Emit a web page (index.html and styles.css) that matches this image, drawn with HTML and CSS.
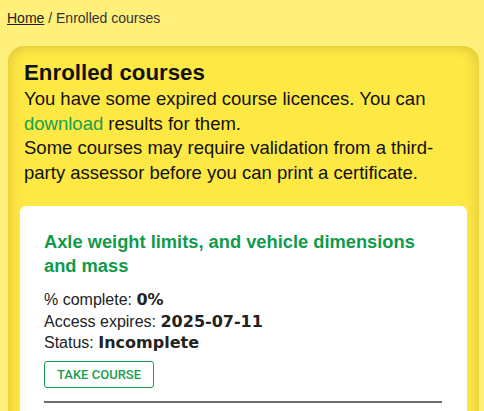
FILE: index.html
```html
<!DOCTYPE html>
<html lang="en">
<head>
    <meta charset="UTF-8">
    <meta name="viewport" content="width=device-width, initial-scale=1.0">
    <title>Enrolled courses</title>
    <link rel="stylesheet" href="styles.css">
</head>
<body>
    <nav class="breadcrumbs">
        <a href="#">Home</a> / Enrolled courses
    </nav>

    <section class="panel">
        <h1>Enrolled courses</h1>
        <p class="intro">
            You have some expired course licences. You can
            <a href="#">download</a> results for them.<br>
            Some courses may require validation from a third-party assessor before you can print a certificate.
        </p>

        <div class="course-card">
            <h2>Axle weight limits, and vehicle dimensions and mass</h2>
            <div class="course-info">
                <div>% complete: <strong>0%</strong></div>
                <div>Access expires: <strong>2025-07-11</strong></div>
                <div>Status: <strong>Incomplete</strong></div>
            </div>
            <button class="take-btn">Take course</button>
            <hr>
        </div>
    </section>
</body>
</html>
```

FILE: styles.css
```css
body {
    margin: 0;
    padding: 0 5px 0 8px;
    font-family: "Liberation Sans", Arial, sans-serif;
    background-color: #fff07c;
    color: #111;
}

.breadcrumbs {
    padding-top: 10px;
    height: 46px;
    box-sizing: border-box;
    font-size: 14px;
    color: #333;
    margin-left: -1px;
}

.breadcrumbs a {
    color: #222;
}

.panel {
    background-color: #fee844;
    border-radius: 16px 16px 0 0;
    box-shadow: inset 0 8px 12px -6px #e3ca3a, inset 10px 0 12px -6px #e9d13c, inset -10px 0 12px -6px #e9d13c;
    padding: 12px 12px 0 12px;
    min-height: 400px;
}

.panel h1 {
    margin: 0;
    padding: 0 4px;
    font-size: 22.3px;
    line-height: 29px;
}

.intro {
    margin: 0;
    padding: 0 4px;
    font-size: 18.5px;
    line-height: 24.5px;
}

.intro a {
    color: #15a04c;
    text-decoration: none;
}

.course-card {
    margin-top: 21px;
    background-color: #fff;
    border-radius: 6px 6px 0 0;
    padding: 24px 24px 10px 24px;
}

.course-card h2 {
    margin: 0 0 11px 0;
    font-size: 18.3px;
    line-height: 24px;
    color: #109a4c;
}

.course-info {
    font-size: 16px;
    line-height: 21.5px;
    color: #222;
}

.course-info strong {
    font-family: "DejaVu Sans", sans-serif;
    font-size: 16px;
}

.take-btn {
    margin-top: 7px;
    width: 110px;
    height: 27px;
    background: #fff;
    border: 1px solid #16a04e;
    border-radius: 3px;
    color: #16a04e;
    font-family: Roboto, sans-serif;
    font-weight: 500;
    font-size: 13px;
    text-transform: uppercase;
    padding: 0;
}

.course-card hr {
    margin: 13px 1px 0 0;
    border: 0;
    border-top: 2px solid #6c6c6c;
}
```
